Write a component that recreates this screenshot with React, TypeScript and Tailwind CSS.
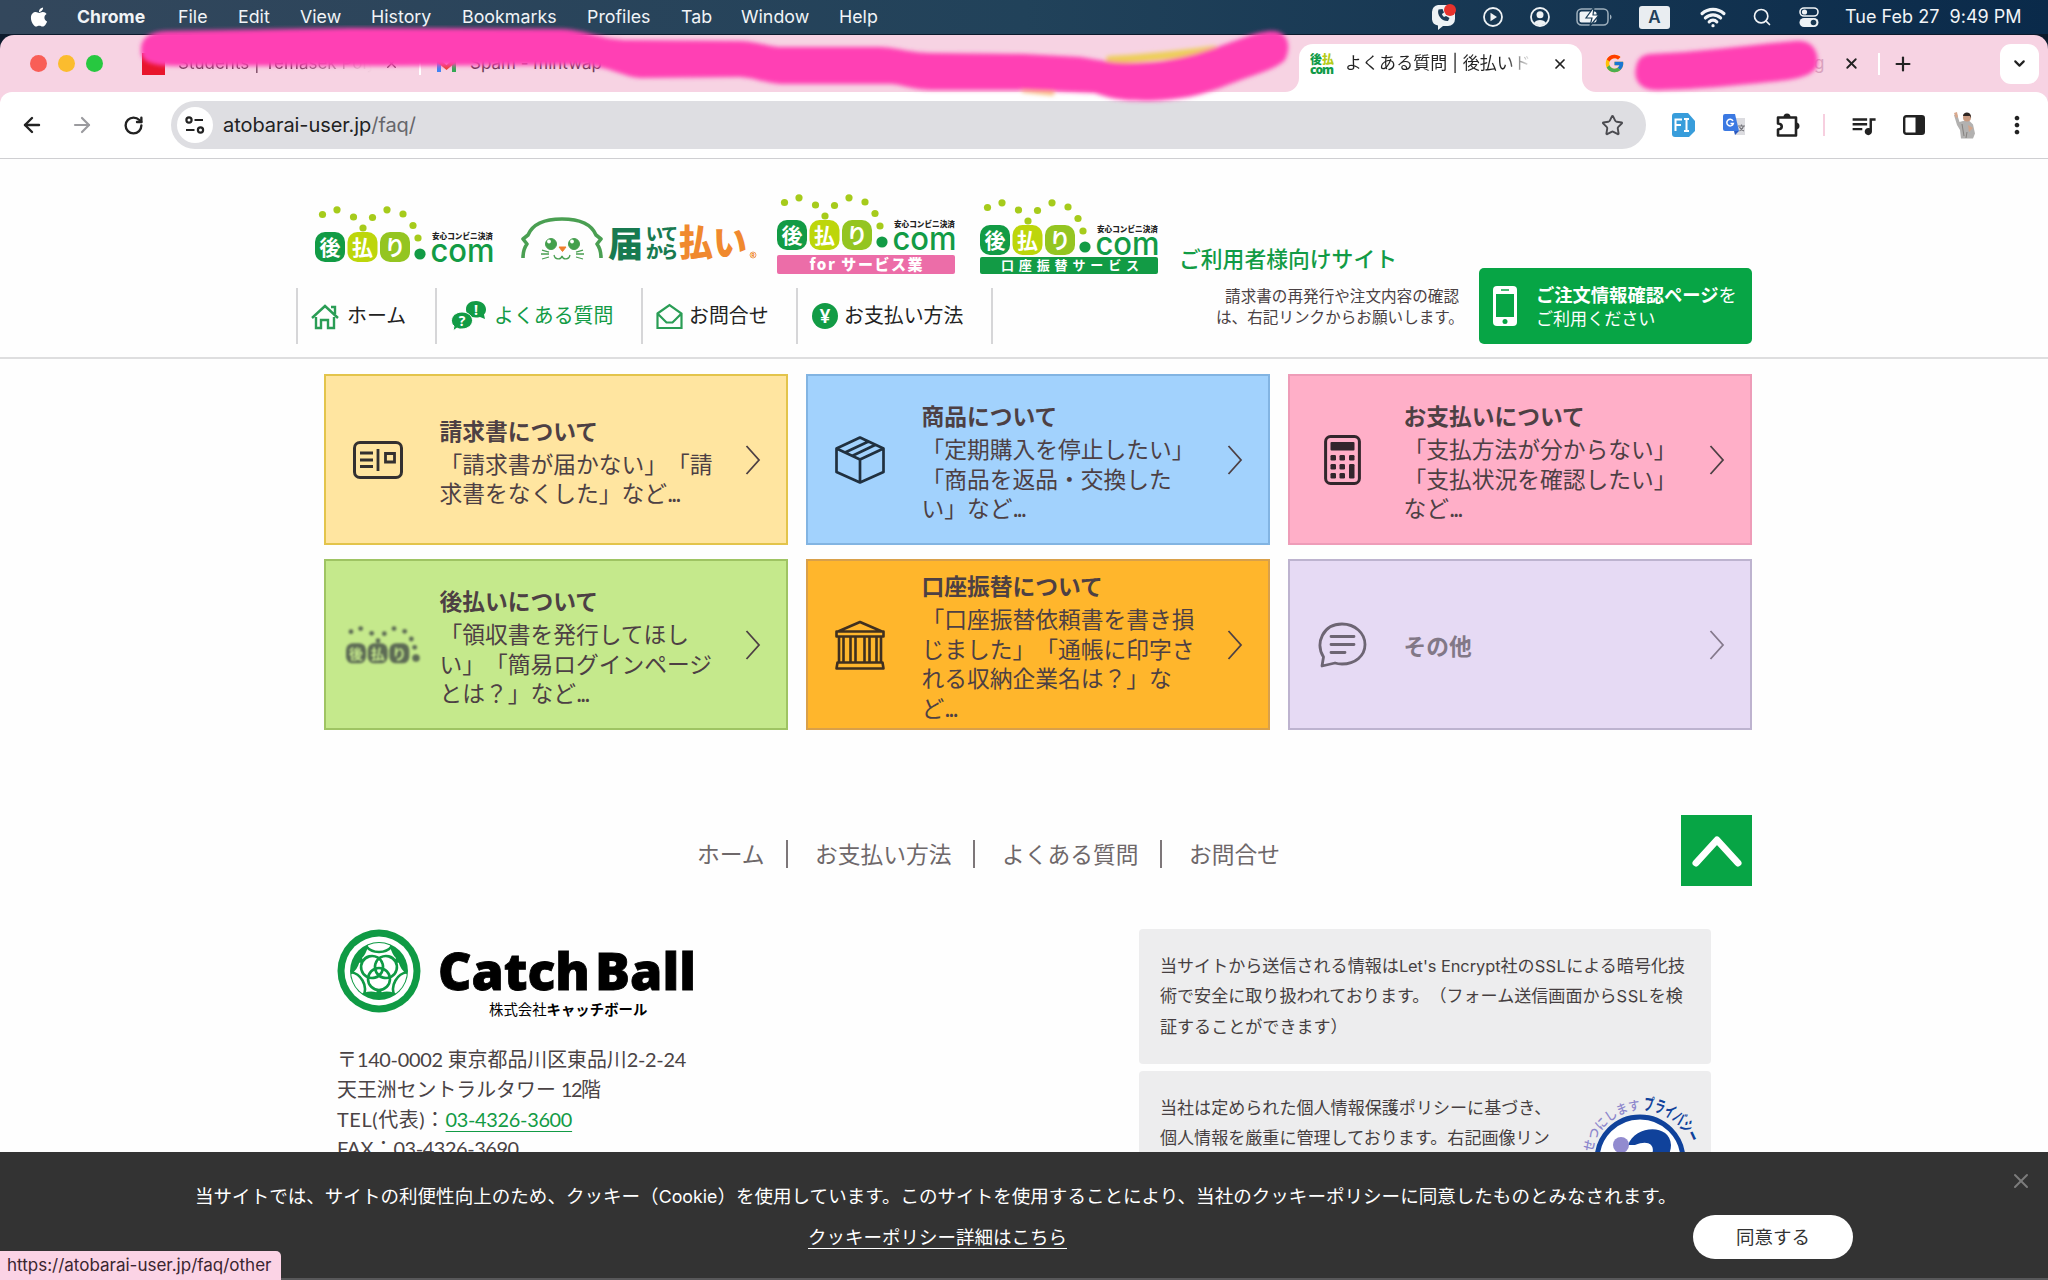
import React from "react";
import {
  ArrowLeft,
  ArrowRight,
  RotateCw,
  Star,
  X,
  Plus,
  ChevronDown,
  Search,
  Wifi,
} from "lucide-react";
import { FaApple } from "react-icons/fa";
import { FcGoogle } from "react-icons/fc";
import { MdQueueMusic, MdMoreVert } from "react-icons/md";

const JP = "'Noto Sans CJK JP', sans-serif";

/* ---------- macOS menu bar ---------- */

function MenuBar() {
  return (
    <div className="flex h-[35px] shrink-0 items-center border-b border-[#0c1a2c] bg-gradient-to-r from-[#33475c] via-[#21425a] to-[#0a2a4a] font-[Inter] text-[17.8px] leading-none tracking-[0.02px] text-[#f1f4f7]">
      <FaApple className="ml-[28px] size-[22px] text-white" />
      <span className="ml-[27px] w-[101px] text-[17.6px] font-bold">Chrome</span>
      <span className="w-[60px]">File</span>
      <span className="w-[62px]">Edit</span>
      <span className="w-[71px]">View</span>
      <span className="w-[91px]">History</span>
      <span className="w-[125px]">Bookmarks</span>
      <span className="w-[94px]">Profiles</span>
      <span className="w-[60px]">Tab</span>
      <span className="w-[98px]">Window</span>
      <span>Help</span>
      <div className="ml-auto flex items-center">
        <svg className="w-[28px]" viewBox="0 0 28 26" height="26">
          <path d="M8 1h10a7 7 0 0 1 7 7v7a7 7 0 0 1-7 7h-5l-5 4v-4.500a7 7 0 0 1-6-6V8a7 7 0 0 1 6-7z" fill="#eef2f5" />
          <path d="M8.500 5.500c-2 5 3 12 9.500 11.500l1.500-3-3.500-2-2 1c-1-1-2-2-2-3l2-1.500-1.500-3.500z" fill="#1c3b55" />
          <circle cx="20" cy="6" r="6" fill="#e8322c" />
        </svg>
        <svg className="ml-[24px]" width="22" height="22" viewBox="0 0 22 22" fill="none" stroke="#eef2f5" strokeWidth="1.800">
          <circle cx="11" cy="11" r="9" />
          <path d="M8.500 6.800v8.400l6.500-4.200z" fill="#eef2f5" stroke="none" />
        </svg>
        <svg className="ml-[25px]" width="22" height="22" viewBox="0 0 22 22" fill="none" stroke="#eef2f5" strokeWidth="1.800">
          <circle cx="11" cy="11" r="9" />
          <circle cx="11" cy="8.800" r="3.500" fill="#eef2f5" stroke="none" />
          <path d="M5 17c2-4 10-4 12 0-3 3-9 3-12 0z" fill="#eef2f5" stroke="none" />
        </svg>
        <svg className="ml-[25px]" width="37" height="20" viewBox="0 0 37 20">
          <rect x="1" y="2" width="31" height="16" rx="4.500" fill="none" stroke="#9fb0bd" strokeWidth="1.500" />
          <path d="M34 7.500c2 .8 2 4.200 0 5z" fill="#9fb0bd" />
          <rect x="3.500" y="4.500" width="17" height="11" rx="2" fill="#eef2f5" />
          <path d="M18 0l-8 11h6l-2 8 9-11h-6z" fill="#fff" stroke="#1b3c56" strokeWidth="1.200" />
        </svg>
        <span className="ml-[26px] flex h-[23px] w-[31px] items-center justify-center rounded-[3px] bg-[#e9edf1] text-[17px] font-semibold text-[#22405a]">
          A
        </span>
        <Wifi className="ml-[30px] size-[26px]" strokeWidth={3} />
        <Search className="ml-[26px] size-[20px]" strokeWidth={2} />
        <svg className="ml-[27px]" width="20" height="22" viewBox="0 0 20 22">
          <rect x="1" y="2" width="18" height="8" rx="4" fill="none" stroke="#eef2f5" strokeWidth="1.600" />
          <circle cx="5.500" cy="6" r="2.600" fill="#eef2f5" />
          <rect x="0.500" y="12" width="19" height="9" rx="4.500" fill="#eef2f5" />
          <circle cx="14.500" cy="16.500" r="2.800" fill="#1a3953" />
        </svg>
        <span className="ml-[26px] mr-[26px] w-[177px] whitespace-pre text-[18px] tracking-[0.02px]">Tue Feb 27  9:49 PM</span>
      </div>
    </div>
  );
}

/* ---------- browser tabs ---------- */

function AtobaraiFavicon() {
  return (
    <svg width="24" height="22" viewBox="0 0 24 22" fontFamily={JP} fontWeight="900">
      <text x="0" y="10.500" fontSize="12" fill="#0f9a48">後</text>
      <text x="12" y="10.500" fontSize="12" fill="#b5cc1a">払</text>
      <text x="0" y="20.500" fontSize="12" fill="#0f9a48" textLength="24" fontFamily="Open Sans">com</text>
    </svg>
  );
}

function TabFlare({ className }: { className: string }) {
  return (
    <svg className={className} width="14" height="14" viewBox="0 0 14 14">
      <path d="M14 0v14H0A14 14 0 0 0 14 0z" fill="#fff" />
    </svg>
  );
}

function TabStrip() {
  return (
    <div className="relative flex h-[57px] shrink-0 items-center font-[Inter] text-[17px]">
      <div className="ml-[30px] flex gap-[11px]">
        <span className="size-[17px] rounded-full bg-[#f95e57]" />
        <span className="size-[17px] rounded-full bg-[#fbbc2e]" />
        <span className="size-[17px] rounded-full bg-[#27c840]" />
      </div>
      <span className="ml-[39px] h-[22px] w-[23px] bg-[#e8152c]" />
      <span className="ml-[13px] w-[194px] whitespace-nowrap bg-gradient-to-r from-[#6b3b55] from-60% to-transparent bg-clip-text text-transparent">
        Students | Temasek Poly
      </span>
      <X className="ml-[12px] size-[15px] text-[#6b3b55]" />
      <span className="ml-[20px] h-[22px] w-[2px] bg-white" />
      <svg className="ml-[15px]" width="21" height="17" viewBox="0 0 21 17">
        <path d="M1 2v15h4V7z" fill="#4285f4" />
        <path d="M20 2v15h-4V7z" fill="#34a853" />
        <path d="M1 2l9.500 8L20 2v5l-9.500 8L1 7z" fill="#ea4335" />
      </svg>
      <span className="ml-[13px] w-[829px] whitespace-nowrap text-[#6b3b55]">Spam - mintwap</span>
      <TabFlare className="-ml-[14px] self-end" />
      <div className="mt-[9px] flex h-[48px] w-[283px] items-center self-start rounded-t-[14px] bg-white pb-[8px] pl-[11px]">
        <AtobaraiFavicon />
        <span className="ml-[11px] w-[188px] overflow-hidden whitespace-nowrap bg-gradient-to-r from-[#222] from-85% to-transparent bg-clip-text font-['Inter','Noto_Sans_CJK_JP',sans-serif] text-[17px] tracking-[0.05px] text-transparent">
          よくある質問 | 後払いド
        </span>
        <X className="ml-[19px] size-[16px] text-[#222]" strokeWidth={2.6} />
      </div>
      <TabFlare className="-scale-x-100 self-end" />
      <FcGoogle className="ml-[8px] size-[21px]" />
      <span className="ml-[189px] w-[14px] text-[#d9a3be]">g</span>
      <X className="ml-[15px] size-[17px] text-[#222]" strokeWidth={2.6} />
      <span className="ml-[18px] h-[22px] w-[2px] bg-white" />
      <Plus className="ml-[12px] size-[22px] text-[#222]" strokeWidth={2.4} />
      <span className="ml-auto mr-[9px] flex h-[40px] w-[39px] items-center justify-center rounded-[11px] bg-white">
        <ChevronDown className="size-[17px] text-[#222]" strokeWidth={3} />
      </span>

      <svg className="absolute left-0 top-[-10px] z-10" width="2048" height="90" viewBox="0 25 2048 90">
        <defs>
          <filter id="soft" x="-5%" y="-30%" width="110%" height="160%">
            <feGaussianBlur stdDeviation="2" />
          </filter>
        </defs>
        <g filter="url(#soft)">
          <path d="M1110 60C1150 58 1180 54 1215 50" stroke="#edcf56" strokeWidth="8" fill="none" strokeLinecap="round" />
          <path d="M1024 90l28 3" stroke="#f8c27c" strokeWidth="5" fill="none" strokeLinecap="round" />
          <path
            d="M141 50C141 36 152 31 170 31L350 28 560 29C590 30 600 40 630 40L740 41C760 42 765 46 780 47L880 47C900 48 905 52 930 53L1024 54 1080 57C1110 62 1120 64 1150 62C1180 60 1210 50 1240 39C1255 33 1265 31 1273 31C1288 32 1292 46 1285 60C1275 70 1250 76 1230 84C1200 96 1180 100 1150 101C1120 101 1108 98 1095 93L1024 90 930 90C910 89 900 84 890 84L780 84C760 82 755 78 740 77L640 78C620 76 610 66 580 65L400 66 180 66C150 66 141 62 141 50Z"
            fill="#ff41b4"
          />
          <path
            d="M1650 54C1700 52 1740 46 1795 41C1812 39 1820 52 1817 66C1812 78 1790 80 1770 82C1730 86 1700 89 1662 90C1640 92 1633 80 1636 67C1638 58 1642 55 1650 54Z"
            fill="#ff41b4"
          />
        </g>
      </svg>
    </div>
  );
}

function Toolbar() {
  return (
    <div className="flex h-[67px] shrink-0 items-center rounded-t-[12px] border-b-[1.5px] border-[#cfcfd2] bg-white text-[#222]">
      <ArrowLeft className="ml-[20px] size-[24px]" strokeWidth={2.4} />
      <ArrowRight className="ml-[26px] size-[24px] text-[#9b9b9f]" strokeWidth={2.2} />
      <RotateCw className="ml-[29px] size-[21px]" strokeWidth={2.7} />
      <div className="ml-[27px] flex h-[48px] w-[1475px] items-center rounded-full bg-[#dedee2] pl-[6px]">
        <span className="flex size-[36px] items-center justify-center rounded-full bg-white">
          <svg width="20" height="18" viewBox="0 0 20 18" fill="none" stroke="#222" strokeWidth="2.200">
            <circle cx="4" cy="4" r="2.600" />
            <path d="M9.500 4H18M1 14h8.500" />
            <circle cx="15.500" cy="14" r="2.600" />
          </svg>
        </span>
        <span className="ml-[10px] whitespace-nowrap font-[Inter] text-[20px] leading-none tracking-[-0.06px] text-[#222]">
          atobarai-user.jp<span className="text-[#66666b]">/faq/</span>
        </span>
        <Star className="ml-auto mr-[22px] size-[23px] text-[#4b4b50]" strokeWidth={2} />
      </div>
      <svg className="ml-[26px]" width="23" height="24" viewBox="0 0 23 24">
        <path d="M3 0h13l7 8v10l-6 6H3a3 3 0 0 1-3-3V3a3 3 0 0 1 3-3z" fill="#389ddb" />
        <path d="M3.500 18V6.500H10M3.500 12H9M12 6h5M14.500 6v12M12 18h5" stroke="#fff" strokeWidth="2" fill="none" />
      </svg>
      <svg className="ml-[28px]" width="24" height="24" viewBox="0 0 24 24">
        <path d="M10 5h12v17H12z" fill="#dcdce0" />
        <path d="M2 1h10l4 17H2a2 2 0 0 1-2-2V3a2 2 0 0 1 2-2z" fill="#3b79e2" />
        <path d="M10 8a3.300 3.300 0 1 0 .3 2.500H7.500" stroke="#fff" strokeWidth="1.500" fill="none" />
        <path d="M15 13h7M18.500 11.500V13M20.500 13c-.7 3-2 4-4 5M16.500 14c1 2 2.500 3.500 4.500 4" stroke="#76767c" strokeWidth="1.200" fill="none" />
        <path d="M12 22l4-4h-5z" fill="#2b59c0" />
      </svg>
      <svg className="ml-[28px]" width="27" height="26" viewBox="0 0 27 26">
        <path
          d="M3 5.500H21V23.500H3V17.500C8 17 8 12 3 11.500Z"
          fill="none"
          stroke="#222"
          strokeWidth="2.600"
          strokeLinejoin="round"
        />
        <path d="M8.500 5a3.500 3.500 0 0 1 7 0zM21 10.500a3.500 3.500 0 0 1 0 7z" fill="#222" />
      </svg>
      <span className="ml-[21px] h-[22px] w-[2px] bg-[#f7cfdf]" />
      <MdQueueMusic className="ml-[24px] size-[29px]" />
      <svg className="ml-[25px]" width="22" height="20" viewBox="0 0 22 20">
        <rect x="1.200" y="1.200" width="19.600" height="17.600" rx="2" fill="none" stroke="#222" strokeWidth="2.400" />
        <path d="M12.500 1h8v18h-8z" fill="#222" />
      </svg>
      <svg className="ml-[28px]" width="24" height="27" viewBox="0 0 24 27">
        <path d="M1 3L4 2l2.500 8L10 9l6-.500 4 4 2 9-2 5H8L7 18 4 13z" fill="#b2b1b0" />
        <path d="M1 1l3-1 1 5-2 1z" fill="#d9a88c" />
        <circle cx="14" cy="5.500" r="4" fill="#c99a80" />
        <path d="M10 4c0-5 9-5 8 2l-1-2z" fill="#2e2522" />
        <path d="M15 13l5 3-4 4z" fill="#d2a58b" />
        <path d="M9 12l2 12M14 20l-1 6" stroke="#85827f" />
      </svg>
      <MdMoreVert className="ml-[26px] size-[28px]" />
    </div>
  );
}

/* ---------- site logos ---------- */

type MarkProps = { tone?: "color" | "gray"; wordmark?: boolean };

function AtobaraiMark({ tone = "color", wordmark = true }: MarkProps) {
  const gray = tone === "gray";
  const squares = gray ? ["#5d6b55", "#5d6b55", "#5d6b55"] : ["#129b45", "#bdd60b", "#94c521"];
  const dot = gray ? "#5d6b55" : "#a6cb1b";
  const dots = [
    [7.5, 8.5], [22, 3.8], [38.500, 11], [48, 22], [57.500, 11.500], [72, 3.800], [88, 8], [98, 19.500], [103, 32],
  ];
  return (
    <g>
      {dots.map(([x, y]) => (
        <circle key={x} cx={x} cy={y} r="3.600" fill={dot} />
      ))}
      {["後", "払", "り"].map((glyph, i) => (
        <g key={glyph}>
          <rect x={i * 32.5} y="26" width="30" height="30" rx="10" fill={squares[i]} />
          <text x={i * 32.5 + 15} y="49" textAnchor="middle" fontSize="21" fontWeight="700" fontFamily={JP} fill={gray ? "#c5e98c" : "#fff"}>
            {glyph}
          </text>
        </g>
      ))}
      <circle cx="105" cy="48" r="5.600" fill={gray ? "#5d6b55" : "#129b45"} />
      {wordmark && (
        <g>
          <text x="117" y="33" fontSize="8" fontWeight="900" fontFamily={JP} fill="#222" textLength="61" lengthAdjust="spacingAndGlyphs">
            安心コンビニ決済
          </text>
          <text x="115.500" y="55.500" fontSize="32" fontWeight="500" fontFamily="Inter" fill="#129b45" textLength="64" lengthAdjust="spacingAndGlyphs">
            com
          </text>
        </g>
      )}
    </g>
  );
}

function TodoiteLogo() {
  return (
    <svg className="mb-[12px] ml-[28px]" width="238" height="48" viewBox="0 0 238 48" fontFamily={JP} fontWeight="800">
      <g fill="none" stroke="#4a9f52" strokeWidth="3.600" strokeLinejoin="round">
        <path d="M2 44c0-6 1-10 4-14l-4-5 5-4C12 9 25 5 41 5s29 4 34 16l5 4-4 5c3 4 4 8 4 14" />
      </g>
      <circle cx="30" cy="30" r="5.500" fill="#43a04c" stroke="#4a9f52" strokeWidth="1" />
      <circle cx="53" cy="30" r="5.500" fill="#43a04c" stroke="#4a9f52" strokeWidth="1" />
      <circle cx="28" cy="27.500" r="1.900" fill="#fff" />
      <circle cx="51" cy="27.500" r="1.900" fill="#fff" />
      <path d="M38 33h7l-3.500 4.500z" fill="#ee7f2d" stroke="#ee7f2d" strokeLinejoin="round" />
      <path d="M33 41c1 5 7 5 8 1 1 4 7 4 8-1M21 36l7 2M20 40h8M21 45l7-2M62 36l-7 2M63 40h-8M62 45l-7-2" fill="none" stroke="#4a9f52" strokeWidth="1.300" />
      <text x="87" y="43" fontSize="35" fontWeight="900" fill="#187a50" textLength="35" lengthAdjust="spacingAndGlyphs">届</text>
      <text x="125" y="26" fontSize="17" fill="#187a50" textLength="32">いて</text>
      <text x="125" y="43.500" fontSize="17" fill="#187a50" textLength="32">から</text>
      <text x="158" y="42" fontSize="36" fontWeight="900" fill="#f0892e" textLength="68" lengthAdjust="spacingAndGlyphs">払い</text>
      <circle cx="232" cy="41" r="3" fill="none" stroke="#f0a060" />
      <text x="232" y="43" fontSize="5" textAnchor="middle" fill="#f0892e">R</text>
    </svg>
  );
}

/* ---------- site header ---------- */

function NavItem({ icon, label, className }: { icon: React.ReactNode; label: string; className: string }) {
  return (
    <div className={"flex h-[56px] items-center border-l-2 border-[#d6d6d8] " + className}>
      {icon}
      <span className="whitespace-nowrap pb-[2px]">{label}</span>
    </div>
  );
}

function SiteHeader() {
  return (
    <header className="flex h-[200px] shrink-0 items-end border-b-2 border-[#dededf] pb-[13px] pl-[296px]">
      <div className="w-[920px]">
        <div className="flex items-end pb-[14px] pl-[19px]">
          <svg className="mb-[11px] shrink-0" width="178" height="57" viewBox="0 0 178 57">
            <AtobaraiMark />
          </svg>
          <div className="shrink-0"><TodoiteLogo /></div>
          <svg className="ml-[18px] shrink-0" width="178" height="80" viewBox="0 0 178 80">
            <AtobaraiMark />
            <rect y="61" width="178" height="19" rx="2" fill="#ec6da8" />
            <text x="89" y="76" fontSize="15" fontWeight="800" fontFamily={JP} fill="#fff" textAnchor="middle" textLength="113">
              for サービス業
            </text>
          </svg>
          <svg className="ml-[25px] shrink-0" width="178" height="75" viewBox="0 0 178 75">
            <AtobaraiMark />
            <rect y="58" width="178" height="17" rx="2" fill="#129b45" />
            <text x="21" y="71" fontSize="13" fontWeight="600" fontFamily={JP} fill="#fff" textLength="138">
              口座振替サービス
            </text>
          </svg>
          <span className="mb-[1px] ml-[21px] whitespace-nowrap text-[21.8px] font-medium leading-[30px] text-[#129b45]">
            ご利用者様向けサイト
          </span>
        </div>
        <nav className="flex text-[19.9px] leading-none text-[#222]">
          <NavItem
            className="w-[139px] gap-[8px] pl-[13px]"
            label="ホーム"
            icon={
              <svg width="28" height="27" viewBox="0 0 28 27" fill="none" stroke="#2a9d55" strokeWidth="2.400">
                <path d="M1 15L14 3l13 12M20 4h4v7M5 14v11h5v-8h7v8h6V14" />
              </svg>
            }
          />
          <NavItem
            className="w-[206px] gap-[7px] pl-[14px] text-[#129b45]"
            label="よくある質問"
            icon={
              <svg width="36" height="32" viewBox="0 0 36 32" fontFamily="Open Sans" fontWeight="700">
                <path d="M25 1c6 0 10 4 10 8.500 0 2-.8 4-2 5L34 19l-5-2c-8 2-14-2-14-7.500S19 1 25 1z" fill="#129b45" />
                <path d="M11 12c6 0 10.500 4 10.500 8.500S17 29 11 29c-2 0-3.500 0-5-1l-4 3 1-5C1 24.500.5 22.500.5 20.500.5 16 5 12 11 12z" fill="#129b45" stroke="#fff" strokeWidth="1" />
                <text x="25" y="15" fontSize="14" textAnchor="middle" fill="#fff">!</text>
                <text x="11" y="25.500" fontSize="14" textAnchor="middle" fill="#fff">?</text>
              </svg>
            }
          />
          <NavItem
            className="w-[155px] gap-[6px] pl-[13px]"
            label="お問合せ"
            icon={
              <svg width="27" height="27" viewBox="0 0 27 27" fill="none" stroke="#2a9d55" strokeWidth="2.200">
                <path d="M1.500 10.500L13.500 2l12 8.500V25h-24zM1.500 10.500l9 9h6l9-9" />
              </svg>
            }
          />
          <NavItem
            className="w-[197px] gap-[6px] border-r-2 pl-[14px]"
            label="お支払い方法"
            icon={
              <span className="flex size-[26px] items-center justify-center rounded-full bg-[#129b45] font-[Lato] text-[18px] font-black text-white">
                ¥
              </span>
            }
          />
        </nav>
      </div>
      <p className="mb-[17px] w-[248px] whitespace-nowrap text-right text-[15.6px] leading-[21px] text-[#4a4143]">
        <span className="mr-[5px]">請求書の再発行や注文内容の確認</span>
        <br />
        <span className="mr-[1px]">は、右記リンクからお願いします。</span>
      </p>
      <a className="ml-[15px] flex h-[76px] w-[273px] items-center rounded-[5px] bg-[#07a545] pl-[14px] text-white">
        <svg width="24" height="40" viewBox="0 0 24 40">
          <rect width="24" height="40" rx="4" fill="#fff" />
          <rect x="3" y="8" width="18" height="23" fill="#07a545" />
          <path d="M8 4h8" stroke="#07a545" strokeWidth="1.500" />
          <circle cx="12" cy="35.500" r="2.500" fill="#07a545" />
        </svg>
        <span className="ml-[19px] flex flex-col whitespace-nowrap text-[17.07px] leading-[23px]">
          <span className="text-[18.3px]">
            <b>ご注文情報確認ページ</b>を
          </span>
          <span>ご利用ください</span>
        </span>
      </a>
    </header>
  );
}

/* ---------- category cards ---------- */

function InvoiceIcon() {
  return (
    <svg width="50" height="38" viewBox="0 0 50 38" fill="none" stroke="#333030" strokeWidth="3">
      <rect x="1.500" y="1.500" width="47" height="35" rx="5.500" />
      <path d="M7 12h13M7 19h13M7 25.500h13M25 8v22M32.500 12.500h9v8.500h-9z" strokeWidth="2.800" />
    </svg>
  );
}

function BoxIcon() {
  return (
    <svg width="50" height="50" viewBox="0 0 50 50" fill="none" stroke="#20303f" strokeWidth="2.700" strokeLinejoin="round">
      <path d="M25 2.500l23.500 11v23.500L25 47.500 1.500 37V13.500zM1.500 13.500L25 24.500l23.500-11M25 24.500v23M10 17.500L33.500 6.500M17 21L40.500 9.800" />
    </svg>
  );
}

function CalculatorIcon() {
  const rows = [20, 29, 38];
  return (
    <svg width="37" height="50" viewBox="0 0 37 50" fill="#33262c">
      <rect x="1.600" y="1.600" width="33.800" height="46.800" rx="5" fill="none" stroke="#33262c" strokeWidth="3" />
      <rect x="6.500" y="7" width="24" height="8.500" rx="1" />
      {rows.map((y) => (
        <g key={y}>
          <rect x="6.500" y={y} width="5.500" height="5.500" rx="1.200" />
          <rect x="15.500" y={y} width="5.500" height="5.500" rx="1.200" />
        </g>
      ))}
      <rect x="25" y="20" width="5.500" height="5.500" rx="1.200" />
      <rect x="25" y="29" width="5.500" height="14.500" rx="1.200" />
    </svg>
  );
}

function BankIcon() {
  return (
    <svg width="50" height="50" viewBox="0 0 50 50" fill="none" stroke="#40301f" strokeWidth="2.600" strokeLinejoin="round">
      <path d="M25 2l22 9.500H3zM1.500 11.500h47v5h-47zM4 16.500v26M8.500 16.500v26M15.500 16.500v26M20.500 16.500v26M29.500 16.500v26M34.500 16.500v26M41.500 16.500v26M46 16.500v26M2.500 42.500h45l1 6h-47z" />
    </svg>
  );
}

function ChatIcon() {
  return (
    <svg width="50" height="50" viewBox="0 0 50 50" fill="none" stroke="#6d6573" strokeWidth="2.800" strokeLinejoin="round" strokeLinecap="round">
      <path d="M5 46l1.500-9C-2 23 6 4 25 4c13 0 23 9 23 20.500S38 44 25 44c-3 0-5.500-.5-7-1z" />
      <path d="M14 16.500h23M14 24.500h23M14 32.500h14" />
    </svg>
  );
}

type CardProps = {
  title: string;
  lines?: string[];
  more?: string;
  icon: React.ReactNode;
  tone: string;
  faded?: boolean;
};

function Card({ title, lines = [], more, icon, tone, faded }: CardProps) {
  return (
    <a className={"flex h-[171px] items-center border-2 " + tone + (faded ? " text-[#827887]" : " text-[#4d4044]")}>
      <span className="ml-[12px] flex w-[80px] shrink-0 justify-center">{icon}</span>
      <span className="mb-[2px] ml-[21.5px] flex w-[284px] flex-col whitespace-nowrap text-[22.75px] leading-[29.7px] [text-spacing-trim:space-all]">
        <b className="pt-[5px] font-bold leading-[34.700px]">{title}</b>
        {lines.map((line) => (
          <span key={line}>{line}</span>
        ))}
        {more && (
          <span>
            {more}
            <span className="tracking-[-2.2px]">...</span>
          </span>
        )}
      </span>
      <svg className="ml-[21px]" width="16" height="30" viewBox="0 0 16 30" fill="none" stroke={faded ? "#85798c" : "currentColor"} strokeWidth="1.800">
        <path d="M1.500 1l12.500 14L1.500 29" />
      </svg>
    </a>
  );
}

function Categories() {
  return (
    <section className="ml-[324px] mt-[15px] grid w-[1428px] shrink-0 grid-cols-3 gap-x-[18px] gap-y-[14px]">
      <Card
        tone="bg-[#ffe5a0] border-[#e3c44b]"
        title="請求書について"
        lines={["「請求書が届かない」「請"]}
        more="求書をなくした」など"
        icon={<InvoiceIcon />}
      />
      <Card
        tone="bg-[#a2d2fd] border-[#82b4e2]"
        title="商品について"
        lines={["「定期購入を停止したい」", "「商品を返品・交換した"]}
        more="い」など"
        icon={<BoxIcon />}
      />
      <Card
        tone="bg-[#ffafc8] border-[#ee9cb8]"
        title="お支払いについて"
        lines={["「支払方法が分からない」", "「支払状況を確認したい」"]}
        more="など"
        icon={<CalculatorIcon />}
      />
      <Card
        tone="bg-[#c5e98c] border-[#9fc463]"
        title="後払いについて"
        lines={["「領収書を発行してほし", "い」「簡易ログインページ"]}
        more="とは？」など"
        icon={
          <svg className="ml-[10px] overflow-visible blur-[0.8px]" width="74" height="38" viewBox="0 0 111 57">
            <AtobaraiMark tone="gray" wordmark={false} />
          </svg>
        }
      />
      <Card
        tone="bg-[#ffb62c] border-[#d9a04a]"
        title="口座振替について"
        lines={["「口座振替依頼書を書き損", "じました」「通帳に印字さ", "れる収納企業名は？」な"]}
        more="ど"
        icon={<BankIcon />}
      />
      <Card faded tone="bg-[#e6daf4] border-[#bdb3cf]" title="その他" icon={<ChatIcon />} />
    </section>
  );
}

/* ---------- site footer ---------- */

function FooterNav() {
  return (
    <div className="mt-[85px] flex h-[71px] shrink-0 items-center pl-[697px] text-[22.75px] leading-none text-[#6e686a]">
      <div className="mt-[6px] flex whitespace-nowrap">
        <span className="h-[28px] w-[91px] border-r-2 border-[#7d7779] pt-[3px]">ホーム</span>
        <span className="h-[28px] w-[187px] border-r-2 border-[#7d7779] pl-[27px] pt-[3px]">お支払い方法</span>
        <span className="h-[28px] w-[187px] border-r-2 border-[#7d7779] pl-[27px] pt-[3px]">よくある質問</span>
        <span className="h-[28px] pl-[27px] pt-[3px]">お問合せ</span>
      </div>
      <a className="ml-auto mr-[296px] flex size-[71px] items-center justify-center bg-[#07a545]">
        <svg width="52" height="34" viewBox="0 0 52 34" fill="none" stroke="#fff" strokeWidth="7" strokeLinecap="round" strokeLinejoin="round">
          <path d="M5 29L26 6l21 23" />
        </svg>
      </a>
    </div>
  );
}

function CatchBallEmblem() {
  return (
    <svg width="84" height="84" viewBox="-42 -42 84 84">
      <defs>
        <clipPath id="ball">
          <circle r="28" />
        </clipPath>
      </defs>
      <circle r="41.500" fill="#0f9a44" />
      <circle r="34.500" fill="#fff" />
      <circle r="29" fill="#0f9a44" />
      <g clipPath="url(#ball)">
        {[0, 120, 240].map((angle) => (
          <g key={angle} transform={`rotate(${angle})`}>
            <path d="M-11 -32H11C10 -24 13 -17 17 -13L8 2H-8L-17 -13C-13 -17 -10 -24 -11 -32Z" fill="#fff" />
            <path d="M-13 -25C-7 -17 7 -17 13 -25" stroke="#0f9a44" strokeWidth="2.600" fill="none" />
          </g>
        ))}
        {[60, 180, 300].map((angle) => (
          <circle key={angle} transform={`rotate(${angle})`} cy="-8" r="11" fill="#fff" />
        ))}
        {[60, 180, 300].map((angle) => (
          <circle key={angle} transform={`rotate(${angle})`} cy="-8" r="11" fill="none" stroke="#0f9a44" strokeWidth="2.600" />
        ))}
      </g>
    </svg>
  );
}

function PrivacyMark() {
  return (
    <svg className="absolute right-[12px] top-[18px]" width="126" height="90" viewBox="0 0 126 90" fontFamily={JP}>
      <defs>
        <path id="mark-arc" d="M22 88A50 50 0 1 1 116 88" />
      </defs>
      <circle cx="67" cy="71" r="43" fill="#fff" stroke="#10429b" strokeWidth="5" />
      <path d="M55 56C62 36 97 34 98 56C98 68 88 78 74 84V71C84 64 82 48 62 56z" fill="#10429b" />
      <circle cx="48" cy="56" r="8" fill="#928bcf" />
      <text fontSize="13" fontWeight="500" fill="#8c86cc" textLength="92" lengthAdjust="spacingAndGlyphs">
        <textPath href="#mark-arc" startOffset="2">たいせつにします</textPath>
      </text>
      <text fontSize="17" fontWeight="700" fill="#10429b" textLength="60" lengthAdjust="spacingAndGlyphs">
        <textPath href="#mark-arc" startOffset="97">プライバシー</textPath>
      </text>
    </svg>
  );
}

function FooterInfo() {
  return (
    <div className="flex h-[266px] shrink-0 overflow-hidden pl-[337px] pt-[43px]">
      <div className="w-[802px] text-[#4a4345]">
        <div className="flex">
          <CatchBallEmblem />
          <div className="pl-[17px] text-black">
            <svg width="262" height="62" viewBox="0 0 262 62" fontFamily="Open Sans" fontWeight="800" stroke="#000" strokeWidth="0.800">
              <text x="0" y="60.500" fontSize="52" textLength="152" lengthAdjust="spacingAndGlyphs">Catch</text>
              <text x="157" y="60.500" fontSize="52" textLength="101" lengthAdjust="spacingAndGlyphs">Ball</text>
            </svg>
            <p className="mt-[7px] pl-[51px] text-[14.4px] leading-[22px]">
              株式会社<b>キャッチボール</b>
            </p>
          </div>
        </div>
        <p className="mt-[25px] whitespace-nowrap font-['Lato','Noto_Sans_CJK_JP',sans-serif] text-[19.9px] leading-[29.8px] [text-spacing-trim:space-all]">
          〒<span className="tracking-[-0.3px]">140-0002</span> 東京都品川区東品川<span className="tracking-[-0.3px]">2-2-24</span>
          <br />
          天王洲セントラルタワー <span className="tracking-[-1.500px]">12</span>階
          <br />
          <span className="tracking-[0.6px]">TEL(代表)：</span>
          <a className="tracking-[-0.3px] text-[#129b45] underline underline-offset-4">03-4326-3600</a>
          <br />
          FAX：<span className="tracking-[-0.4px]">03-4326-3690</span>
        </p>
      </div>
      <div className="w-[572px] whitespace-nowrap text-[17.07px] leading-[30.4px] text-[#463f41] [text-spacing-trim:space-all]">
        <p className="h-[135px] rounded-[4px] bg-[#ededee] pl-[21px] pt-[21px]">
          当サイトから送信される情報は
          <span className="font-[Inter] text-[16.4px] leading-none tracking-[-0.05px]">Let's Encrypt</span>社の
          <span className="font-[Inter] text-[16.4px] leading-none tracking-[0.4px]">SSL</span>による暗号化技
          <br />
          術で安全に取り扱われております。（フォーム送信画面から
          <span className="font-[Inter] text-[16.4px] leading-none tracking-[0.6px]">SSL</span>を検
          <br />
          証することができます）
        </p>
        <div className="relative mt-[7px] h-[150px] rounded-[4px] bg-[#ededee] pl-[21px] pt-[21px]">
          当社は定められた個人情報保護ポリシーに基づき、
          <br />
          個人情報を厳重に管理しております。右記画像リン
          <PrivacyMark />
        </div>
      </div>
    </div>
  );
}

function CookieBar() {
  return (
    <div className="relative h-[128px] shrink-0 border-b-2 border-[#58585a] bg-[#333] text-[18.5px] text-white">
      <p className="whitespace-nowrap pl-[195px] pt-[29px] text-[18.56px] leading-[27px] [text-spacing-trim:space-all]">
        当サイトでは、サイトの利便性向上のため、クッキー（<span className="font-[Inter] text-[17.8px] leading-none">Cookie</span>）を使用しています。このサイトを使用することにより、当社のクッキーポリシーに同意したものとみなされます。
      </p>
      <div className="mt-[7px] flex items-center pl-[808px]">
        <a className="w-[885px] underline underline-offset-4">クッキーポリシー詳細はこちら</a>
        <button className="h-[44px] w-[160px] rounded-full bg-white text-[18.5px] text-[#333]">同意する</button>
      </div>
      <X className="absolute right-[15px] top-[17px] size-[24px] text-[#7c7c7c]" strokeWidth={2} />
      <div className="absolute bottom-[-2px] left-0 flex h-[29px] w-[281px] items-center rounded-tr-[5px] bg-[#fbd3e5] pl-[7px] font-[Inter] text-[17px] leading-none tracking-[0px] text-[#3a2530]">
        https://atobarai-user.jp/faq/other
      </div>
    </div>
  );
}

export default function App() {
  return (
    <div className="flex h-[1280px] w-[2048px] flex-col overflow-hidden bg-[#0c1a2c] font-['Noto_Sans_CJK_JP',sans-serif]">
      <MenuBar />
      <div className="shrink-0 rounded-t-[14px] bg-[#f7d3e3]">
        <TabStrip />
        <Toolbar />
      </div>
      <main className="flex flex-1 flex-col overflow-hidden bg-[#fefefe]">
        <SiteHeader />
        <Categories />
        <FooterNav />
        <FooterInfo />
        <CookieBar />
      </main>
    </div>
  );
}
